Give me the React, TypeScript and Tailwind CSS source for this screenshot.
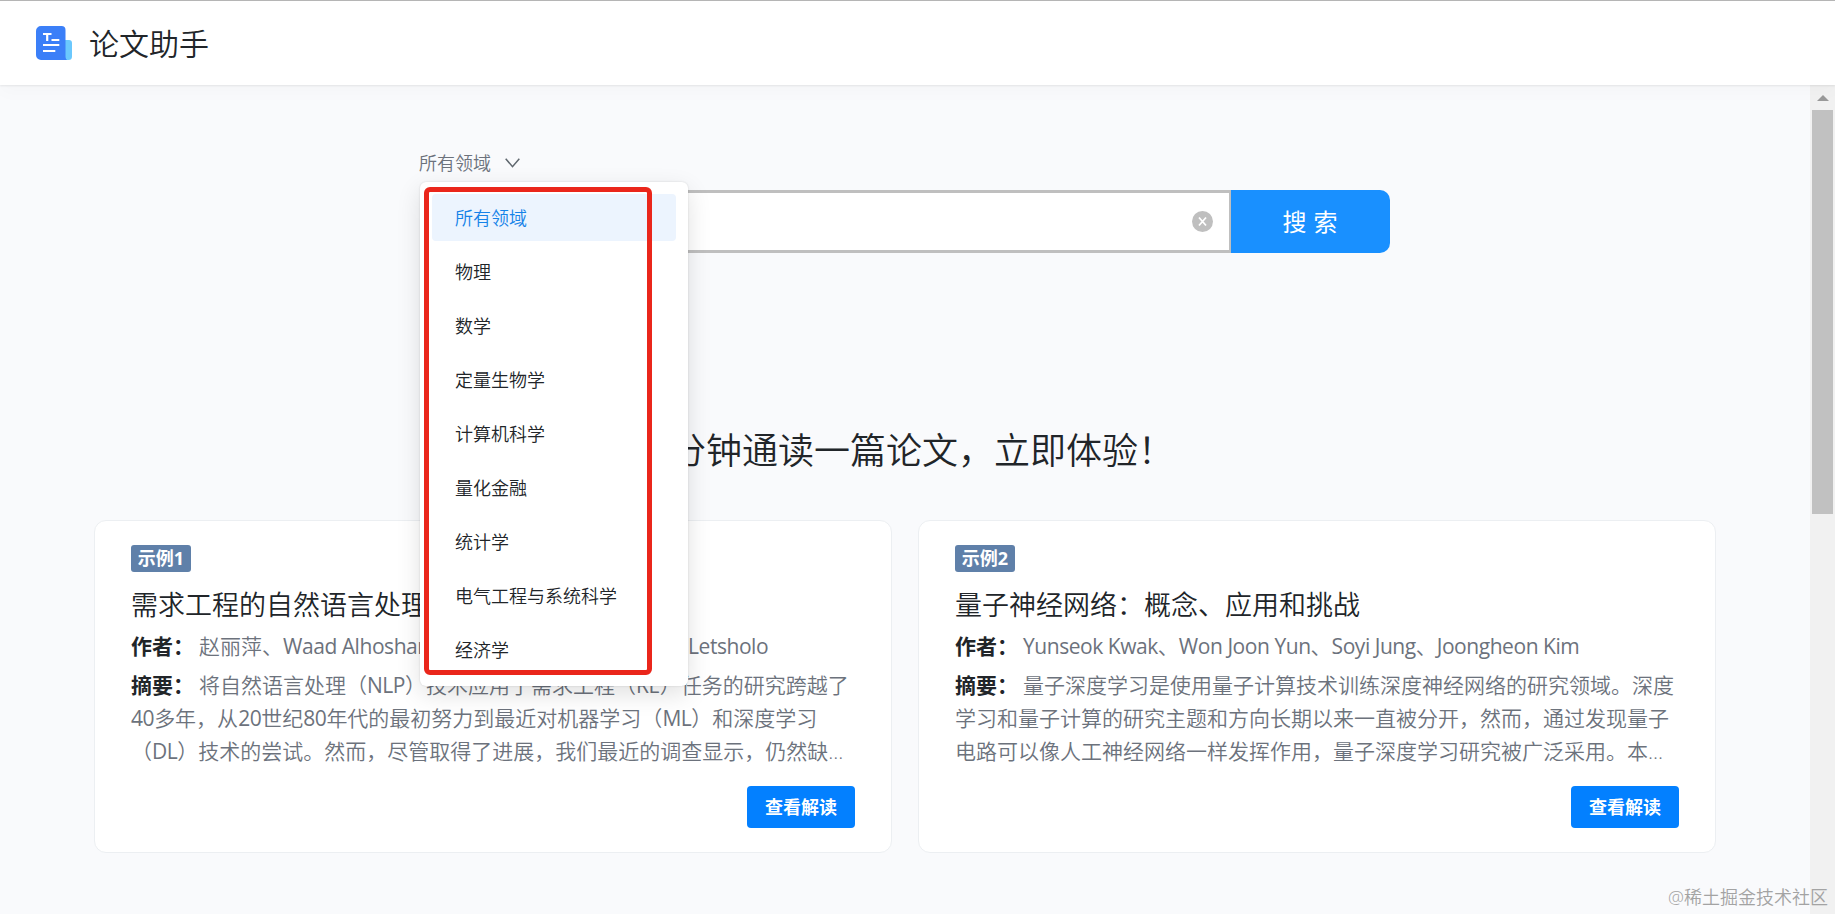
import { useState } from "react"

const fields = [
    "所有领域",
    "物理",
    "数学",
    "定量生物学",
    "计算机科学",
    "量化金融",
    "统计学",
    "电气工程与系统科学",
    "经济学",
];

type Paper = {
    tag: string;
    title: string;
    authors: string;
    abstract: string[];
};

const papers: Paper[] = [
    {
        tag: "示例1",
        title: "需求工程的自然语言处理",
        authors: "赵丽萍、Waad Alhoshan、Alessio Ferrari、Keletso J Letsholo",
        abstract: [
            "将自然语言处理（NLP）技术应用于需求工程（RE）任务的研究跨越了",
            "40多年，从20世纪80年代的最初努力到最近对机器学习（ML）和深度学习",
            "（DL）技术的尝试。然而，尽管取得了进展，我们最近的调查显示，仍然缺...",
        ],
    },
    {
        tag: "示例2",
        title: "量子神经网络：概念、应用和挑战",
        authors: "Yunseok Kwak、Won Joon Yun、Soyi Jung、Joongheon Kim",
        abstract: [
            "量子深度学习是使用量子计算技术训练深度神经网络的研究领域。深度",
            "学习和量子计算的研究主题和方向长期以来一直被分开，然而，通过发现量子",
            "电路可以像人工神经网络一样发挥作用，量子深度学习研究被广泛采用。本...",
        ],
    },
];

function Logo() {
    return (
        <svg className="h-[34px] w-9 shrink-0" viewBox="0 0 36 34">
            <path d="M27 14h6a3 3 0 0 1 3 3v13.500a3.500 3.500 0 0 1-3.500 3.500H26z" fill="#6bc8fd" />
            <path d="M5 0h20.500a4 4 0 0 1 4 4v26.500c0 1.500.5 2.700 1.500 3.500H5a5 5 0 0 1-5-5V5a5 5 0 0 1 5-5z" fill="#3b7ff8" />
            <path d="M7 8h8.500M11.200 8v7" stroke="white" strokeWidth="2.200" fill="none" />
            <path d="M15.500 14h7.800M7 19h16.300M7 25h12.300" stroke="white" strokeWidth="2" fill="none" />
        </svg>
    )
}

// 中英文混排：英文和数字用常规字重，字距略收
function MixedText({ text }: { text: string }) {
    return (
        <span>
            {text.split(/([A-Za-z0-9 ]+)/).map((part, idx) =>
                idx % 2 == 1
                ? <span key={idx} className="font-normal tracking-[-0.45px]">{part}</span>
                : part
            )}
        </span>
    )
}

function PaperCard({ paper }: { paper: Paper }) {
    return (
        <div className="h-[333px] min-w-0 flex-1 rounded-xl border border-[#eceff2] bg-white px-9 pt-6">
            <span className="flex h-[27px] w-[60px] items-center justify-center rounded-[3px] bg-[#5f80a9] text-[18px] font-bold text-white">
                {paper.tag}
            </span>
            <h2 className="mt-[13px] h-10 whitespace-nowrap text-[27px] leading-10 text-[#212529]">{paper.title}</h2>
            <p className="mt-[5px] flex h-[33px] items-center whitespace-nowrap text-[21px] text-[#6c727c]">
                <b className="w-[68px] shrink-0 text-[#212529]">作者：</b>
                <MixedText text={paper.authors} />
            </p>
            <div className="mt-[6px] whitespace-nowrap text-[21px] leading-[33px] text-[#6c727c]">
                {paper.abstract.map((line, idx) => (
                    <p key={idx} className="flex h-[33px]">
                        {idx == 0 && <b className="w-[68px] shrink-0 text-[#212529]">摘要：</b>}
                        <MixedText text={line} />
                    </p>
                ))}
            </div>
            <div className="mt-[18px] flex justify-end">
                <button className="h-[42px] w-[108px] rounded bg-[#0380ff] pt-px text-[18px] font-bold text-white">
                    查看解读
                </button>
            </div>
        </div>
    )
}

export default function App() {
    const [field, setField] = useState(fields[0]);

    return (
        <div className="flex h-[914px] w-[1835px] flex-col overflow-hidden bg-[#f9fafc] font-['Open_Sans','Noto_Sans_CJK_SC',sans-serif] font-[350] [text-spacing-trim:space-all]">
            <header className="z-10 flex h-[85px] shrink-0 items-center gap-[18px] border-t border-[#b5b5b5] bg-white pl-9 shadow-[0_1px_2px_rgba(0,0,0,0.08),0_8px_16px_rgba(0,0,0,0.02)]">
                <Logo />
                <h1 className="-ml-px pt-px text-[30px] leading-none text-[#212529]">论文助手</h1>
            </header>

            <div className="flex min-h-0 flex-1">
                <main className="relative min-w-0 flex-1 px-[94px]">
                    <section className="relative ml-[325px] w-[971px] pt-[60px]">
                        <button className="flex h-9 items-center gap-[14px] text-[18px] text-[#6c727c]">
                            {field}
                            <svg className="h-[10px] w-[15px]" viewBox="0 0 15 10" fill="none" stroke="#5f676e" strokeWidth="1.500">
                                <path d="M.7.700l6.800 8 6.800-8" />
                            </svg>
                        </button>
                        <div className="ml-1 mt-[9px] flex h-[63px]">
                            <div className="flex min-w-0 flex-1 items-center justify-end rounded-l-[10px] border-[3px] border-[#bfbfbf] bg-white pr-4">
                                <svg className="size-[21px]" viewBox="0 0 21 21">
                                    <circle cx="10.500" cy="10.500" r="10.500" fill="#bfbfbf" />
                                    <path d="M7 6.500l7 8M14 6.500l-7 8" stroke="white" strokeWidth="1.800" />
                                </svg>
                            </div>
                            <button className="-ml-px w-[159px] rounded-r-[10px] bg-[#1990ff] pl-[6px] pt-px text-[24px] font-normal tracking-[7px] text-white">
                                搜索
                            </button>
                        </div>

                        <ul className="absolute left-px top-[97px] z-20 flex h-[504px] w-[268px] flex-col gap-[7px] rounded-md bg-white px-3 pt-3 shadow-[0_0_2px_rgba(0,0,0,0.15),0_8px_24px_rgba(0,0,0,0.12)]">
                            {fields.map(item => (
                                <li
                                    key={item}
                                    onClick={() => setField(item)}
                                    className={
                                        item == field
                                        ? "flex h-[47px] shrink-0 items-center rounded bg-[#ecf4fe] pl-[23px] pt-[2px] text-[18px] text-[#1683e8]"
                                        : "flex h-[47px] shrink-0 items-center rounded pl-[23px] pt-[2px] text-[18px] text-[#212529]"
                                    }
                                >
                                    {item}
                                </li>
                            ))}
                        </ul>
                        {/* 领域列表的标注框 */}
                        <div className="pointer-events-none absolute left-[5px] top-[102px] z-30 h-[488px] w-[228px] rounded-md border-[5px] border-[#ea261b]" />
                    </section>

                    <h2 className="mt-[168px] whitespace-nowrap pl-[540px] text-[36px] leading-[60px] text-[#212529]">
                        几分钟通读一篇论文，立即体验！
                    </h2>

                    <section className="mt-[39px] flex gap-[26px]">
                        {papers.map(paper => <PaperCard key={paper.tag} paper={paper} />)}
                    </section>
                </main>

                <aside className="flex w-[25px] shrink-0 flex-col items-center bg-[#f1f1f1]">
                    <div className="flex h-[25px] items-center">
                        <svg className="h-[6px] w-[12px]" viewBox="0 0 12 6">
                            <path d="M0 6l6-6 6 6z" fill="#999" />
                        </svg>
                    </div>
                    <div className="h-[404px] w-[21px] bg-[#c1c1c1]" />
                </aside>
            </div>

            <span className="absolute left-[1668px] top-[884px] z-40 whitespace-nowrap text-[18px] leading-[26px] text-[#a3a3a3]">
                @稀土掘金技术社区
            </span>
        </div>
    )
}
